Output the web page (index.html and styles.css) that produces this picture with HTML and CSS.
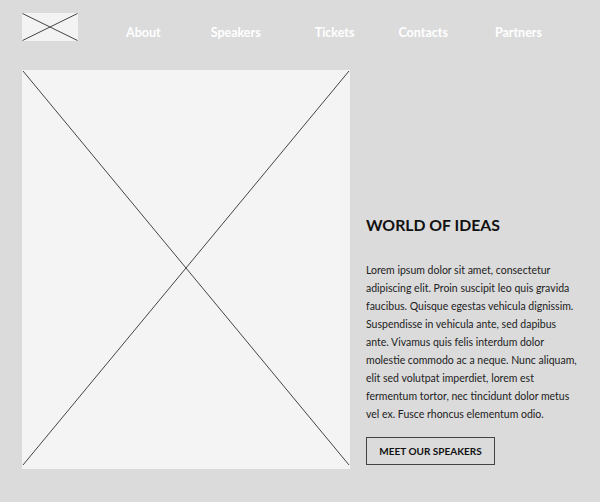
FILE: index.html
```html
<!DOCTYPE html>
<html>
<head>
<meta charset="utf-8">
<link rel="stylesheet" href="styles.css">
</head>
<body>
<header class="header">
  <div class="logo">
    <svg class="ph" viewBox="0 0 56 28" preserveAspectRatio="none">
      <line x1="0.5" y1="0.5" x2="55.5" y2="27.5"/>
      <line x1="55.5" y1="0.5" x2="0.5" y2="27.5"/>
    </svg>
  </div>
  <nav class="nav">
    <a class="nav-link">About</a>
    <a class="nav-link">Speakers</a>
    <a class="nav-link">Tickets</a>
    <a class="nav-link">Contacts</a>
    <a class="nav-link">Partners</a>
  </nav>
</header>
<main class="hero">
  <div class="hero-image">
    <svg class="ph" viewBox="0 0 328 399" preserveAspectRatio="none">
      <line x1="1" y1="1" x2="327" y2="395"/>
      <line x1="327" y1="1" x2="1" y2="395"/>
    </svg>
  </div>
  <div class="hero-text">
    <h1 class="title">WORLD OF IDEAS</h1>
    <p class="copy">Lorem ipsum dolor sit amet, consectetur adipiscing elit. Proin suscipit leo quis gravida faucibus. Quisque egestas vehicula dignissim. Suspendisse in vehicula ante, sed dapibus ante. Vivamus quis felis interdum dolor molestie commodo ac a neque. Nunc aliquam, elit sed volutpat imperdiet, lorem est fermentum tortor, nec tincidunt dolor metus vel ex. Fusce rhoncus elementum odio.</p>
    <a class="btn">MEET OUR SPEAKERS</a>
  </div>
</main>
</body>
</html>
```
FILE: styles.css
```css
html, body {
  margin: 0;
  padding: 0;
}
body {
  width: 600px;
  height: 502px;
  background: #dbdbdb;
  font-family: "Lato", "Open Sans", sans-serif;
  overflow: hidden;
}
.header {
  display: flex;
  align-items: flex-start;
  padding: 13px 0 0 22px;
  height: 28px;
}
.logo {
  flex: none;
  width: 56px;
  height: 28px;
  background: #f3f3f3;
}
.ph {
  display: block;
  width: 100%;
  height: 100%;
}
.ph line {
  stroke: #444;
  stroke-width: 1;
}
.nav {
  display: flex;
  flex: none;
  margin: 12px 0 0 48px;
  line-height: 16px;
}
.nav-link {
  color: #fff;
  font-weight: 700;
  font-size: 12.5px;
  margin-right: 50px;
  white-space: nowrap;
}
.nav-link:nth-child(2) {
  margin-right: 54px;
}
.nav-link:nth-child(3) {
  margin-right: 44px;
}
.nav-link:nth-child(4) {
  margin-right: 47px;
}
.nav-link:last-child {
  margin-right: 0;
}
.hero {
  display: flex;
  align-items: flex-end;
  padding: 29px 0 0 22px;
}
.hero-image {
  width: 328px;
  height: 399px;
  background: #f4f4f4;
  flex: none;
}
.hero-text {
  margin-left: 16px;
  width: 215px;
  padding-bottom: 4px;
}
.title {
  margin: 0 0 26px;
  font-size: 15.8px;
  font-weight: 700;
  color: #111;
  line-height: 20px;
}
.copy {
  margin: 0 0 14px;
  font-size: 10.5px;
  line-height: 18px;
  color: #222;
}
.btn {
  display: inline-block;
  box-sizing: border-box;
  width: 129px;
  height: 28px;
  line-height: 26px;
  border: 1px solid #444;
  text-align: center;
  font-size: 10px;
  font-weight: 700;
  color: #111;
}
```
